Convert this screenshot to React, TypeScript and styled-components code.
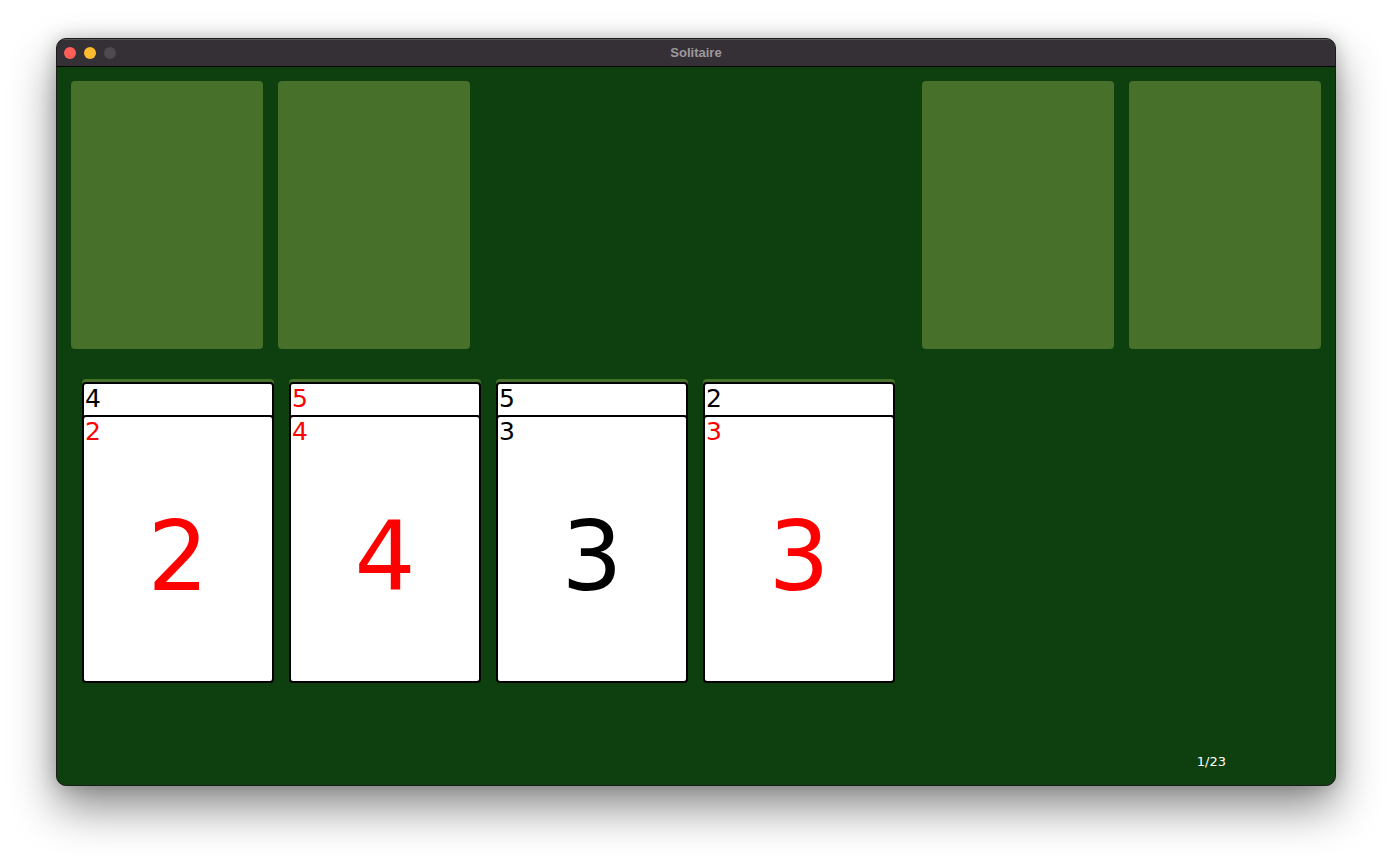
import React from "react";
import styled, { createGlobalStyle } from "styled-components";

const Global = createGlobalStyle`
  html, body { margin: 0; padding: 0; background: #ffffff; }
  body { font-family: "Liberation Sans", "DejaVu Sans", sans-serif; }
`;

const Stage = styled.div`
  width: 1392px;
  height: 860px;
  padding: 38px 56px;
  box-sizing: border-box;
`;

const Window = styled.div`
  width: 1280px;
  height: 748px;
  box-sizing: border-box;
  border: 1px solid #1c1c1c;
  border-radius: 10px;
  overflow: hidden;
  display: flex;
  flex-direction: column;
  background: #0e3f0e;
  box-shadow: 0 22px 45px rgba(0, 0, 0, 0.45), 0 0 18px rgba(0, 0, 0, 0.2);
`;

const TitleBar = styled.div`
  height: 27px;
  flex: none;
  display: flex;
  align-items: center;
  position: relative;
  background: #353035;
  border-bottom: 1px solid #000;
  box-shadow: inset 0 1px 0 #5a565a;
`;

const Lights = styled.div`
  display: flex;
  gap: 8px;
  padding-left: 7px;
`;

const Light = styled.span<{ $c: string }>`
  width: 12px;
  height: 12px;
  border-radius: 50%;
  background: ${(p) => p.$c};
`;

const Title = styled.div`
  position: absolute;
  left: 0;
  right: 0;
  text-align: center;
  font-size: 13px;
  font-weight: 700;
  color: #9d999d;
  pointer-events: none;
`;

const Content = styled.div`
  flex: 1;
  display: flex;
  flex-direction: column;
  padding: 14px 14px 0 14px;
`;

const TopRow = styled.div`
  display: flex;
  justify-content: space-between;
`;

const Group = styled.div`
  display: flex;
  gap: 15px;
`;

const Slot = styled.div`
  width: 192px;
  height: 268px;
  border-radius: 4px;
  background: #47702a;
`;

const Tableau = styled.div`
  display: flex;
  gap: 15px;
  margin-top: 30px;
  padding-left: 11px;
`;

const Column = styled.div`
  width: 192px;
  display: flex;
  flex-direction: column;
`;

const ColumnSlot = styled(Slot)`
  height: 40px;
  margin-bottom: -37px;
`;

const Card = styled.div<{ $first?: boolean }>`
  position: relative;
  width: 192px;
  height: 268px;
  box-sizing: border-box;
  border: 2px solid #000;
  border-radius: 4px;
  background: #fff;
  margin-top: ${(p) => (p.$first ? "0" : "-235px")};
  font-family: "Comic Sans MS", "DejaVu Sans", sans-serif;
`;

const Rank = styled.div<{ $red: boolean }>`
  color: ${(p) => (p.$red ? "#ff0000" : "#000")};
  font-size: 25px;
  line-height: 30px;
  padding-left: 1px;
`;

const Big = styled.div<{ $red: boolean }>`
  color: ${(p) => (p.$red ? "#ff0000" : "#000")};
  font-size: 96px;
  line-height: 96px;
  text-align: center;
  margin-top: 62px;
`;

const Footer = styled.div`
  margin-top: auto;
  padding: 0 95px 16px 0;
  text-align: right;
  color: #ffffff;
  font-family: "DejaVu Sans", sans-serif;
  font-size: 13px;
`;

type C = { r: string; red: boolean };
const columns: C[][] = [
  [{ r: "4", red: false }, { r: "2", red: true }],
  [{ r: "5", red: true }, { r: "4", red: true }],
  [{ r: "5", red: false }, { r: "3", red: false }],
  [{ r: "2", red: false }, { r: "3", red: true }],
];

export default function App() {
  return (
    <>
      <Global />
      <Stage>
        <Window>
          <TitleBar>
            <Lights>
              <Light $c="#ff5f57" />
              <Light $c="#febc2e" />
              <Light $c="#4e4a4e" />
            </Lights>
            <Title>Solitaire</Title>
          </TitleBar>
          <Content>
            <TopRow>
              <Group>
                <Slot />
                <Slot />
              </Group>
              <Group>
                <Slot />
                <Slot />
              </Group>
            </TopRow>
            <Tableau>
              {columns.map((col, i) => (
                <Column key={i}>
                  <ColumnSlot />
                  {col.map((c, j) => (
                    <Card key={j} $first={j === 0}>
                      <Rank $red={c.red}>{c.r}</Rank>
                      {j === col.length - 1 && <Big $red={c.red}>{c.r}</Big>}
                    </Card>
                  ))}
                </Column>
              ))}
            </Tableau>
            <Footer>1/23</Footer>
          </Content>
        </Window>
      </Stage>
    </>
  );
}
